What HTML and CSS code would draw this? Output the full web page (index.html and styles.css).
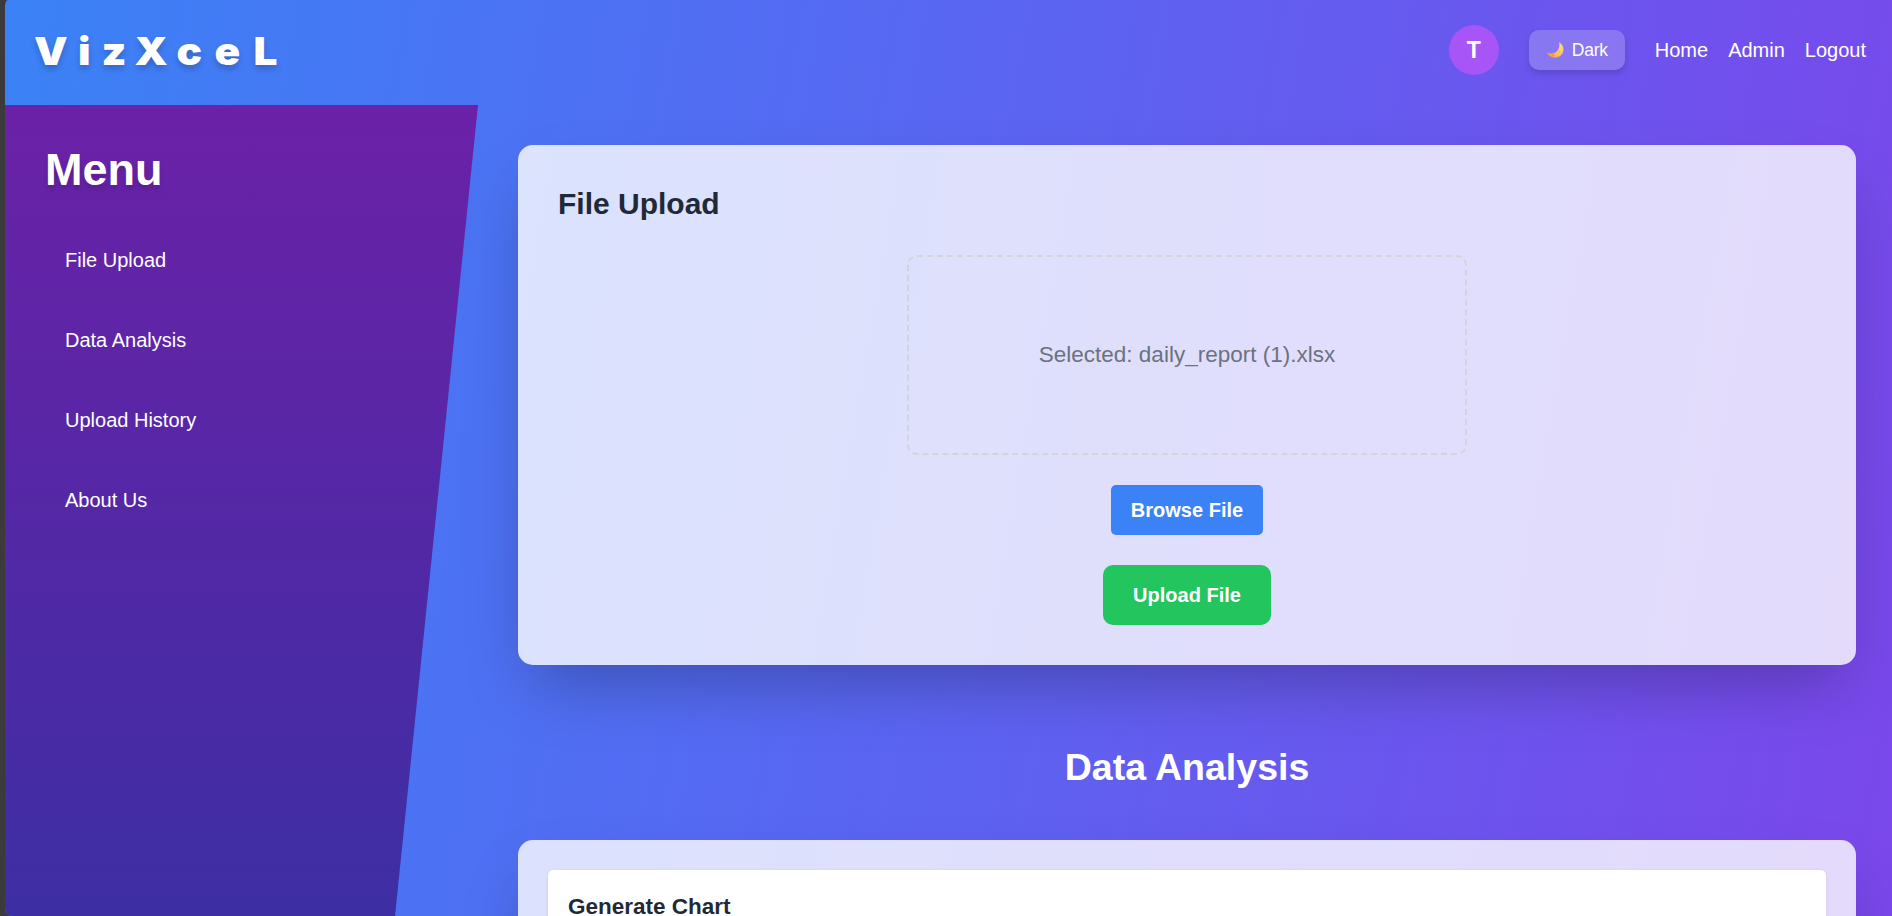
FILE: index.html
```html
<!DOCTYPE html>
<html lang="en">
<head>
<meta charset="utf-8">
<title>VizXceL</title>
<link rel="stylesheet" href="styles.css">
</head>
<body>
<div class="app">
  <header class="header">
    <h1 class="logo"><span class="v">V</span><span class="i">i</span><span class="z">z</span><span class="x">X</span><span class="c">c</span><span class="e">e</span><span class="l">L</span></h1>
    <nav class="nav">
      <div class="avatar">T</div>
      <button class="theme">
        <svg class="moon" viewBox="0 0 18 18"><defs><linearGradient id="m" x1="1" y1="0" x2="0" y2="1"><stop offset="0" stop-color="#ffe08a"/><stop offset=".55" stop-color="#fcc05e"/><stop offset="1" stop-color="#f08a3c"/></linearGradient></defs><path d="M13 1C19 5 18.500 12 14 15C9 18.500 3 16.500 .8 11.300C5 13.300 9 12.800 11.300 9.800C13.500 7 13.800 4 13 1Z" fill="url(#m)"/><circle cx="7" cy="14.200" r=".9" fill="#e98d47"/><circle cx="13.500" cy="11" r=".8" fill="#efa653"/></svg>
        <span>Dark</span>
      </button>
      <div class="links"><a>Home</a><a>Admin</a><a>Logout</a></div>
    </nav>
  </header>
  <div class="body">
    <aside class="sidebar">
      <h2 class="menu-title">Menu</h2>
      <a class="menu-item">File Upload</a>
      <a class="menu-item">Data Analysis</a>
      <a class="menu-item">Upload History</a>
      <a class="menu-item">About Us</a>
    </aside>
    <main class="main">
      <section class="card upload">
        <h2 class="card-title">File Upload</h2>
        <div class="dropzone">Selected: daily_report (1).xlsx</div>
        <button class="browse">Browse File</button>
        <button class="submit">Upload File</button>
      </section>
      <h2 class="section-title">Data Analysis</h2>
      <section class="card analysis">
        <div class="panel"><h3 class="panel-title">Generate Chart</h3></div>
      </section>
    </main>
  </div>
</div>
</body>
</html>
```
FILE: styles.css
```css
* { box-sizing: border-box; margin: 0; padding: 0; }
html { font-size: 20px; }
body { background: #3b3b3b; height: 916px; overflow: hidden; padding-left: 5px; font-family: "Liberation Sans", Arial, sans-serif; line-height: 1.5; color: #fff; }
button { border: 0; font: inherit; color: #fff; }
.app { height: 916px; overflow: hidden; border-radius: 3px 0 0 8px / 6px 0 0 8px; background: linear-gradient(100deg, #3b82f6 0%, #5b64f1 51%, #7c46eb 102%); }
.header { height: 105px; padding: 0 26px 5px 29px; display: flex; align-items: center; justify-content: space-between; }
.logo { display: flex; padding-top: 2px; font-family: Inter, "Liberation Sans", sans-serif; font-weight: 900; font-size: 38.500px; line-height: 50px; text-shadow: 0 4px 6px rgba(0,0,0,.2); transform: scaleX(1.1); transform-origin: left; }
.v { width: 40px; } .i { width: 21.300px; } .z { width: 30px; } .x { width: 38.200px; } .c { width: 34.600px; } .e { width: 35.500px; }
.nav { display: flex; align-items: center; gap: 30px; }
.avatar { width: 50px; height: 50px; border-radius: 50%; background: #a855f7; display: grid; place-items: center; font-weight: 700; font-size: 23px; }
.theme { width: 96px; height: 40px; border-radius: 10px; background: rgba(255,255,255,.2); box-shadow: 0 4px 6px rgba(0,0,0,.14); display: flex; align-items: center; justify-content: center; gap: 8px; font-size: 17.500px; }
.theme span { letter-spacing: -.2px; }
.moon { width: 18px; height: 18px; }
.links { display: flex; gap: 20px; font-size: 20px; }
.body { display: flex; align-items: flex-start; }
.sidebar { flex: none; width: 473px; height: 925px; padding: 40px; background: linear-gradient(#6b21a8, #3730a3); clip-path: polygon(0 0, 100% 0, 80% 100%, 0 100%); }
.menu-title { font-size: 45px; line-height: 50px; margin-bottom: 40px; text-shadow: 0 4px 5px rgba(0,0,0,.15); }
.menu-item { display: block; padding: 10px 20px; height: 50px; margin-bottom: 30px; line-height: 30px; }
.main { flex: 1; padding: 40px 36px 0 40px; }
.card { border-radius: 15px; background: rgba(255,255,255,.8); box-shadow: 0 31px 62px -15px rgba(0,0,0,.27); color: #1f2937; }
.upload { height: 520px; padding: 40px; display: flex; flex-direction: column; align-items: center; }
.card-title { align-self: flex-start; font-size: 30px; line-height: 40px; margin: -1px 0 31px; }
.dropzone { width: 560px; height: 200px; border: 2px dashed #d1d5db; border-radius: 10px; display: grid; place-items: center; font-size: 22.500px; color: #6b7280; }
.browse { width: 152px; height: 50px; margin-top: 30px; border-radius: 5px; background: #3b82f6; font-weight: 700; }
.submit { width: 168px; height: 60px; margin-top: 30px; border-radius: 10px; background: #22c55e; font-weight: 700; }
.section-title { font-size: 37.500px; line-height: 45px; margin: 80px 0 50px; text-align: center; }
.analysis { height: 500px; padding: 30px; }
.panel { height: 440px; padding: 20px; border-radius: 5px; background: #fff; box-shadow: 0 1px 3px rgba(0,0,0,.12); }
.panel-title { font-size: 22.500px; line-height: 33px; }
```
